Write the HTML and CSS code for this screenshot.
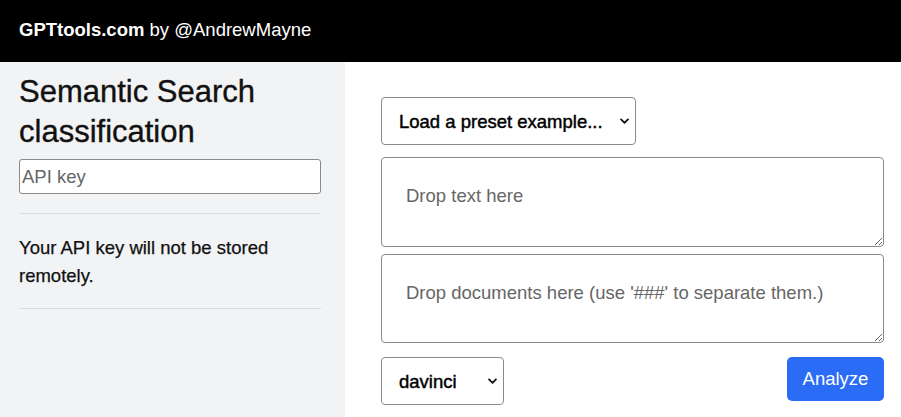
FILE: index.html
```html
<!DOCTYPE html>
<html lang="en">
<head>
<meta charset="utf-8">
<title>Semantic Search classification</title>
<link rel="stylesheet" href="styles.css">
</head>
<body>
<header class="topbar"><span class="brand">GPTtools.com</span>&nbsp;by @AndrewMayne</header>
<div class="layout">
  <aside class="sidebar">
    <h1 class="title">Semantic Search classification</h1>
    <input class="api-key" type="text" placeholder="API key">
    <hr class="rule">
    <p class="note">Your API key will not be stored remotely.</p>
    <hr class="rule rule-end">
  </aside>
  <main class="content">
    <div class="select-wrap">
      <select class="select select-preset">
        <option>Load a preset example...</option>
      </select>
      <svg class="chev" viewBox="0 0 10 7" aria-hidden="true"><path d="M1.2 1.2 L5 5 L8.8 1.2" fill="none" stroke="#111" stroke-width="2" stroke-linecap="round" stroke-linejoin="round"/></svg>
    </div>
    <textarea class="field field-query" placeholder="Drop text here"></textarea>
    <textarea class="field field-docs" placeholder="Drop documents here (use '###' to separate them.)"></textarea>
    <div class="actions">
      <div class="select-wrap">
        <select class="select select-engine">
          <option>davinci</option>
          <option>curie</option>
          <option>babbage</option>
          <option>ada</option>
        </select>
        <svg class="chev" viewBox="0 0 10 7" aria-hidden="true"><path d="M1.2 1.2 L5 5 L8.8 1.2" fill="none" stroke="#111" stroke-width="2" stroke-linecap="round" stroke-linejoin="round"/></svg>
      </div>
      <button class="btn" type="button">Analyze</button>
    </div>
  </main>
</div>
</body>
</html>
```

FILE: styles.css
```css
html, body {
  margin: 0;
  padding: 0;
}

body {
  font-family: "Liberation Sans", Arial, sans-serif;
  color: #111;
  background: #fff;
}

.topbar {
  height: 62px;
  box-sizing: border-box;
  background: #000;
  color: #fff;
  display: flex;
  align-items: center;
  padding: 0 0 3px 19px;
  font-size: 18.5px;
}

.brand {
  font-weight: bold;
}

.layout {
  display: flex;
  min-height: calc(100vh - 62px);
}

.sidebar {
  flex: none;
  width: 345px;
  box-sizing: border-box;
  padding: 10px 24px 0 19px;
  background: #f2f3f5;
}

.title {
  margin: 0;
  font-size: 31px;
  font-weight: normal;
  line-height: 40px;
  color: #111;
  -webkit-text-stroke: 0.35px #111;
}

.api-key {
  display: block;
  width: 100%;
  box-sizing: border-box;
  height: 35px;
  margin: 7px 0 0;
  padding: 0 2px;
  border: 1px solid #8a8a8a;
  border-radius: 3px;
  background: #fff;
  font-family: inherit;
  font-size: 18.5px;
  color: #111;
}

.api-key::placeholder {
  color: #666;
}

.rule {
  border: 0;
  border-top: 1px solid #dcdde0;
  margin: 19px 0 20px;
}

.rule-end {
  margin-top: 18px;
}

.note {
  margin: 0;
  font-size: 18.5px;
  line-height: 27.75px;
  -webkit-text-stroke: 0.25px #111;
}

.content {
  flex: 1;
  display: flex;
  flex-direction: column;
  align-items: flex-start;
  padding: 35px 17px 0 36px;
}

.select-wrap {
  position: relative;
}

.select {
  display: block;
  appearance: none;
  -webkit-appearance: none;
  box-sizing: border-box;
  height: 48px;
  margin: 0;
  padding: 0 28px 0 17px;
  border: 1px solid #8a8a8a;
  border-radius: 4px;
  background: #fff;
  font-family: inherit;
  font-size: 18.5px;
  color: #000;
  -webkit-text-stroke: 0.45px #000;
}

.select-preset {
  width: 255px;
}

.select-engine {
  width: 123px;
}

.chev {
  position: absolute;
  right: 7px;
  top: 50%;
  width: 9px;
  height: 7px;
  margin-top: -3px;
  pointer-events: none;
}

.field {
  display: block;
  width: 100%;
  box-sizing: border-box;
  height: 90px;
  margin: 12px 0 0;
  padding: 24px;
  border: 1px solid #8a8a8a;
  border-radius: 4px;
  font-family: inherit;
  font-size: 18.5px;
  line-height: 1.5;
  color: #111;
  resize: vertical;
}

.field::placeholder {
  color: #666;
}

.field-docs {
  height: 89px;
  margin-top: 7px;
}

.actions {
  width: 100%;
  display: flex;
  justify-content: space-between;
  align-items: flex-start;
  margin-top: 14px;
}

.btn {
  width: 97px;
  height: 44px;
  border: 0;
  border-radius: 5px;
  background: #2b6cf6;
  color: #fff;
  font-family: inherit;
  font-size: 18.5px;
  cursor: pointer;
}
```
